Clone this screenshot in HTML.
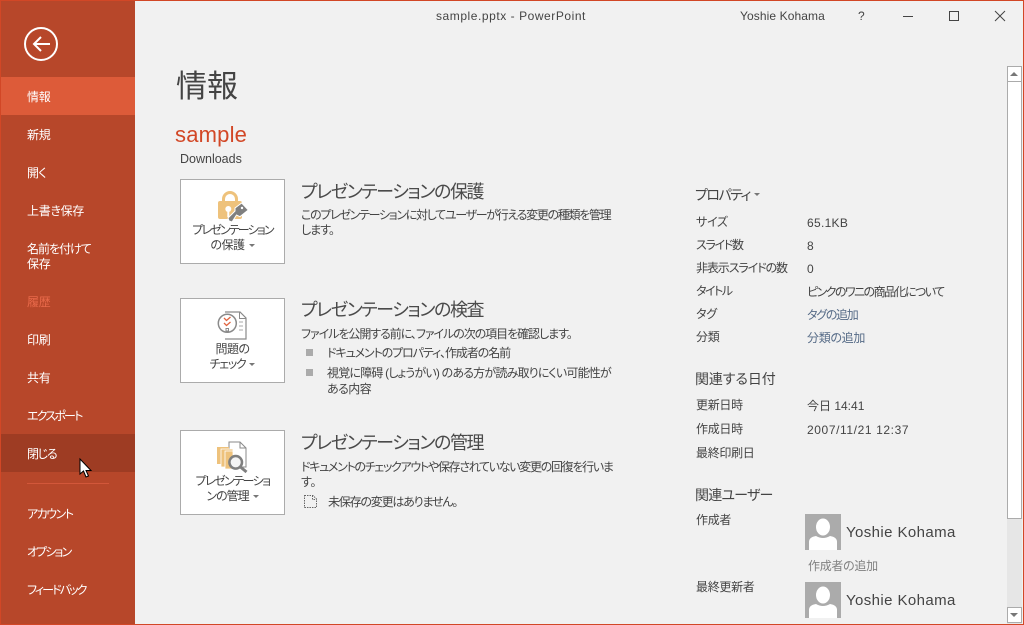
<!DOCTYPE html>
<html lang="ja"><head><meta charset="utf-8"><title>sample.pptx - PowerPoint</title>
<style>
html,body{margin:0;padding:0}
body{width:1024px;height:625px;overflow:hidden;position:relative;background:#f1f1f1;font-family:"Liberation Sans","Noto Sans CJK JP",sans-serif;color:#444;font-size:12px;font-feature-settings:"palt"}
.t{position:absolute;white-space:nowrap;line-height:16px}
.j{letter-spacing:-.3px}
.side{position:absolute;left:0;top:0;width:135px;height:625px;background:#b7472a}
.n{position:absolute;left:27px;color:#fff;white-space:nowrap;line-height:16px;font-size:12px;letter-spacing:-.3px}
.btn{position:absolute;left:180px;width:103px;background:#fff;border:1px solid #ababab}
.btn .l{position:absolute;left:0;width:103px;text-align:center;line-height:15px;font-size:12px;color:#444;white-space:nowrap;letter-spacing:-.5px}
.h{font-size:18px;color:#4a4a4a;letter-spacing:-1.4px}
.lnk{color:#566b87}
.car{display:inline-block;width:0;height:0;border-left:3px solid transparent;border-right:3px solid transparent;border-top:3px solid #777;vertical-align:2px;margin-left:4px}
.sq{position:absolute;left:306px;width:7px;height:7px;background:#ababab}
svg{position:absolute;overflow:visible}
</style></head><body>
<div class="side"></div>
<div style="position:absolute;left:0;top:0;width:1024px;height:1px;background:#d24726"></div>
<div style="position:absolute;left:0;top:624px;width:1024px;height:1px;background:#d24726"></div>
<div style="position:absolute;left:0;top:0;width:1px;height:625px;background:#d24726"></div>
<div style="position:absolute;left:1023px;top:0;width:1px;height:625px;background:#d24726"></div>

<svg style="left:23px;top:26px" width="36" height="36" viewBox="0 0 36 36" fill="none" stroke="#fff"><circle cx="18" cy="18" r="16" stroke-width="2"/><path d="M11 18H27" stroke-width="2"/><path d="M18 11L11 18L18 25" stroke-width="2"/></svg>

<div style="position:absolute;left:1px;top:77px;width:134px;height:38px;background:#dd5b39"></div>
<div style="position:absolute;left:1px;top:434px;width:134px;height:38px;background:#9e3c23"></div>
<div style="position:absolute;left:27px;top:483px;width:82px;height:1px;background:#d2573a"></div>
<div class="n" style="top:89px">情報</div>
<div class="n" style="top:127px">新規</div>
<div class="n" style="top:165px;letter-spacing:-.6px">開く</div>
<div class="n" style="top:203px">上書き保存</div>
<div class="n" style="top:241px;letter-spacing:-1px">名前を付けて</div>
<div class="n" style="top:256px">保存</div>
<div class="n" style="top:294px;color:#e8694a">履歴</div>
<div class="n" style="top:332px">印刷</div>
<div class="n" style="top:370px">共有</div>
<div class="n" style="top:408px;letter-spacing:-1.8px">エクスポート</div>
<div class="n" style="top:446px;letter-spacing:-1.3px">閉じる</div>
<div class="n" style="top:506px;letter-spacing:-1.5px">アカウント</div>
<div class="n" style="top:544px;letter-spacing:-1.9px">オプション</div>
<div class="n" style="top:582px;letter-spacing:-1.9px">フィードバック</div>
<svg style="left:79px;top:458px" width="14" height="21" viewBox="0 0 14 21"><path d="M1 1V16L4.500 13L7 19L9.500 18L7 12.500H12Z" fill="#fff" stroke="#000" stroke-width="1"/></svg>

<div class="t" style="left:436px;top:8px;font-size:12px;letter-spacing:.55px">sample.pptx - PowerPoint</div>
<div class="t" style="left:740px;top:8px;font-size:12px;letter-spacing:.1px">Yoshie Kohama</div>
<div class="t" style="left:858px;top:8px;font-size:12px">?</div>
<svg style="left:900px;top:8px" width="110" height="16" viewBox="0 0 110 16" fill="none" stroke="#444" stroke-width="1"><path d="M3 8.500H13"/><rect x="49.500" y="3.500" width="9" height="9"/><path d="M95 3L105 13M105 3L95 13"/></svg>

<div class="t" style="left:176px;top:65px;font-size:31px;line-height:44px;color:#444">情報</div>
<div class="t" style="left:175px;top:121px;font-size:22px;line-height:28px;color:#d24726;letter-spacing:.2px">sample</div>
<div class="t" style="left:180px;top:151px;font-size:12.500px">Downloads</div>

<div class="btn" style="top:179px;height:83px">
<svg style="left:35px;top:9px" width="34" height="34" viewBox="0 0 34 34"><path d="M7.500 13V10a6.500 6.500 0 0 1 13 0v3" fill="none" stroke="#eec27c" stroke-width="3"/><rect x="2" y="12" width="24" height="18" rx="2" fill="#eec27c"/><circle cx="12.300" cy="20" r="3" fill="#fff"/><rect x="11.300" y="21" width="2" height="7" fill="#fff"/><path d="M13 32L12 29L19 22L19 19L25.700 14L32.300 21L24 27.700L20.500 26L16 33Z" fill="#7f7f7f" stroke="#fff" stroke-width="1"/><circle cx="26" cy="19" r="1.200" fill="#fff"/></svg>
<div class="l" style="top:43px;letter-spacing:-1.85px">プレゼンテーション</div>
<div class="l" style="top:58px">の保護<span class="car"></span></div>
</div>
<div class="t h" style="left:301px;top:180px;line-height:24px">プレゼンテーションの保護</div>
<div class="t" style="left:301px;top:207px;letter-spacing:-1.3px">このプレゼンテーションに対してユーザーが行える変更の種類を管理</div>
<div class="t" style="left:301px;top:222px;letter-spacing:-1px">します。</div>

<div class="btn" style="top:298px;height:83px">
<svg style="left:35px;top:11px" width="34" height="32" viewBox="0 0 34 32" fill="none"><path d="M9 2H24L30 8V29H9" stroke="#8a8a8a" fill="#fff" stroke-width="1.200"/><path d="M23.500 2V8.500H30" stroke="#8a8a8a"/><path d="M23 12h4M23 16h4M23 20h4" stroke="#aaa"/><circle cx="11.300" cy="13.300" r="9" stroke="#8a8a8a" stroke-width="1.500" fill="#fff"/><path d="M8 8l2.500 2.500 4-3.500M8 13l2.500 2.500 4-3.500" stroke="#e0643f" stroke-width="1.300"/><rect x="10" y="18.500" width="2.500" height="2.500" stroke="#8a8a8a"/></svg>
<div class="l" style="top:43px">問題の</div>
<div class="l" style="top:58px;letter-spacing:-1.3px">チェック<span class="car"></span></div>
</div>
<div class="t h" style="left:301px;top:298px;line-height:24px">プレゼンテーションの検査</div>
<div class="t" style="left:301px;top:326px;letter-spacing:-1.05px">ファイルを公開する前に、ファイルの次の項目を確認します。</div>
<div class="sq" style="top:349px"></div>
<div class="t" style="left:327px;top:345px;letter-spacing:-1.1px">ドキュメントのプロパティ、作成者の名前</div>
<div class="sq" style="top:369px"></div>
<div class="t" style="left:327px;top:365px;letter-spacing:-.8px">視覚に障碍 (しょうがい) のある方が読み取りにくい可能性が</div>
<div class="t" style="left:327px;top:381px;letter-spacing:-.6px">ある内容</div>

<div class="btn" style="top:430px;height:83px">
<svg style="left:35px;top:10px" width="34" height="34" viewBox="0 0 34 34" fill="none"><path d="M13 1H24L30 7V26H13Z" stroke="#8a8a8a" fill="#fff"/><path d="M24 1V7H30" stroke="#8a8a8a"/><rect x="1" y="6" width="12" height="17" fill="#eec27c"/><rect x="5" y="8" width="12" height="18" fill="#eec27c" stroke="#fff" stroke-width=".8"/><rect x="9" y="10" width="8" height="18" fill="#eec27c" stroke="#fff" stroke-width=".8"/><circle cx="19.700" cy="21.300" r="6.300" fill="#f4f4f4" stroke="#7f7f7f" stroke-width="2.500"/><path d="M24.500 26L30.500 31" stroke="#7f7f7f" stroke-width="3"/></svg>
<div class="l" style="top:43px;letter-spacing:-1.55px">プレゼンテーショ</div>
<div class="l" style="top:58px;letter-spacing:-1px">ンの管理<span class="car"></span></div>
</div>
<div class="t h" style="left:301px;top:431px;line-height:24px">プレゼンテーションの管理</div>
<div class="t" style="left:301px;top:459px;letter-spacing:-1.3px">ドキュメントのチェックアウトや保存されていない変更の回復を行いま</div>
<div class="t j" style="left:301px;top:474px">す。</div>
<svg style="left:303px;top:494px" width="15" height="15" viewBox="0 0 15 15" fill="none" stroke="#666" stroke-dasharray="1.500 1"><path d="M1.500 1.500H10L13.500 5V13.500H1.500Z"/><path d="M9.500 1.500V5.500H13.500"/></svg>
<div class="t" style="left:328px;top:494px;letter-spacing:-1.2px">未保存の変更はありません。</div>

<div class="t" style="left:695px;top:187px;font-size:14px;letter-spacing:-1.5px">プロパティ<span class="car" style="margin-left:4px;vertical-align:4px"></span></div>
<div class="t j" style="left:696px;top:214px">サイズ</div><div class="t" style="left:807px;top:215px;letter-spacing:.3px">65.1KB</div>
<div class="t" style="left:696px;top:237px;letter-spacing:-1.3px">スライド数</div><div class="t" style="left:807px;top:238px">8</div>
<div class="t" style="left:696px;top:260px;letter-spacing:-1.1px">非表示スライドの数</div><div class="t" style="left:807px;top:261px">0</div>
<div class="t" style="left:696px;top:283px;letter-spacing:-1.5px">タイトル</div><div class="t" style="left:807px;top:284px;letter-spacing:-1.55px">ピンクのワニの商品化について</div>
<div class="t j" style="left:696px;top:306px">タグ</div><div class="t lnk" style="left:807px;top:307px;letter-spacing:-1.3px">タグの追加</div>
<div class="t j lnk" style="left:807px;top:330px">分類の追加</div><div class="t j" style="left:696px;top:329px">分類</div>

<div class="t" style="left:695px;top:371px;font-size:14px;letter-spacing:-.1px">関連する日付</div>
<div class="t j" style="left:696px;top:397px">更新日時</div><div class="t" style="left:807px;top:398px">今日 14:41</div>
<div class="t j" style="left:696px;top:421px">作成日時</div><div class="t" style="left:807px;top:422px;letter-spacing:.6px">2007/11/21 12:37</div>
<div class="t j" style="left:696px;top:445px">最終印刷日</div>

<div class="t" style="left:695px;top:487px;font-size:14px;letter-spacing:-.8px">関連ユーザー</div>
<div class="t j" style="left:696px;top:512px">作成者</div>
<svg style="left:805px;top:514px" width="36" height="36" viewBox="0 0 36 36"><rect width="36" height="36" fill="#ababab"/><ellipse cx="18" cy="13" rx="7" ry="8.500" fill="#fff"/><path d="M4 36V28Q4 23 11 22Q18 26 25 22Q32 23 32 28V36Z" fill="#fff"/></svg>
<div class="t" style="left:846px;top:525px;font-size:15px;letter-spacing:.4px">Yoshie Kohama</div>
<div class="t j" style="left:808px;top:558px;color:#808080">作成者の追加</div>
<div class="t j" style="left:696px;top:579px">最終更新者</div>
<svg style="left:805px;top:582px" width="36" height="36" viewBox="0 0 36 36"><rect width="36" height="36" fill="#ababab"/><ellipse cx="18" cy="13" rx="7" ry="8.500" fill="#fff"/><path d="M4 36V28Q4 23 11 22Q18 26 25 22Q32 23 32 28V36Z" fill="#fff"/></svg>
<div class="t" style="left:846px;top:593px;font-size:15px;letter-spacing:.4px">Yoshie Kohama</div>

<div style="position:absolute;left:1007px;top:66px;width:15px;height:558px;background:#e6e6e6"></div>
<div style="position:absolute;left:1007px;top:66px;width:13px;height:14px;background:#fff;border:1px solid #ababab"></div>
<div style="position:absolute;left:1007px;top:81px;width:13px;height:436px;background:#fff;border:1px solid #ababab"></div>
<div style="position:absolute;left:1007px;top:607px;width:13px;height:14px;background:#fff;border:1px solid #ababab"></div>
<div style="position:absolute;left:1010px;top:72px;width:0;height:0;border-left:4px solid transparent;border-right:4px solid transparent;border-bottom:4px solid #777"></div>
<div style="position:absolute;left:1010px;top:613px;width:0;height:0;border-left:4px solid transparent;border-right:4px solid transparent;border-top:4px solid #777"></div>
</body></html>
